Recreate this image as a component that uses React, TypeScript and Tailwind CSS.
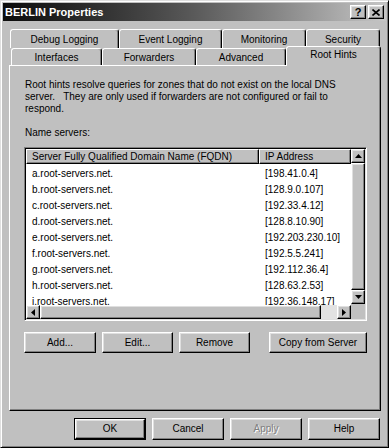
import React from 'react';

// classic 3D edges
const raised =
  'border border-t-white border-l-white border-r-black border-b-black shadow-[inset_-1px_-1px_0_#808080,inset_1px_1px_0_#dfdfdf] bg-[#c0c0c0]';
const sunken =
  'border border-t-[#808080] border-l-[#808080] border-r-white border-b-white shadow-[inset_1px_1px_0_#000,inset_-1px_-1px_0_#dfdfdf]';

const servers = [
  ['a.root-servers.net.', '[198.41.0.4]'],
  ['b.root-servers.net.', '[128.9.0.107]'],
  ['c.root-servers.net.', '[192.33.4.12]'],
  ['d.root-servers.net.', '[128.8.10.90]'],
  ['e.root-servers.net.', '[192.203.230.10]'],
  ['f.root-servers.net.', '[192.5.5.241]'],
  ['g.root-servers.net.', '[192.112.36.4]'],
  ['h.root-servers.net.', '[128.63.2.53]'],
  ['i.root-servers.net.', '[192.36.148.17]'],
];

const Arrow = ({dir}: {dir: 'up' | 'down' | 'left' | 'right'}) => {
  const pts = {
    up: '3.5,0 7,4 0,4',
    down: '0,0 7,0 3.5,4',
    left: '4,0 4,7 0,3.5',
    right: '0,0 4,3.5 0,7',
  }[dir];
  const vertical = dir === 'up' || dir === 'down';
  return (
    <svg
      width={vertical ? 7 : 4}
      height={vertical ? 4 : 7}
      viewBox={vertical ? '0 0 7 4' : '0 0 4 7'}
    >
      <polygon points={pts} fill="#000" />
    </svg>
  );
};

const Tab = ({label, w, selected}: {label: string; w: string; selected?: boolean}) => (
  <div
    className={`${w} ${
      selected ? 'relative z-10 -mb-px h-[20px] pb-[3px]' : 'h-full pt-px'
    } flex items-center justify-center rounded-t-[3px] border-t border-l border-r border-t-white border-l-white border-r-black bg-[#c0c0c0] shadow-[inset_-1px_0_0_#808080]`}
  >
    {label}
  </div>
);

const Button = ({label, w, disabled}: {label: string; w: string; disabled?: boolean}) => (
  <div
    className={`${w} ${raised} flex h-full items-center justify-center ${
      disabled ? 'text-[#808080] [text-shadow:1px_1px_0_#fff]' : ''
    }`}
  >
    {label}
  </div>
);

export default function App() {
  return (
    <div className="h-[448px] w-[389px] bg-[#c0c0c0] font-['Liberation_Sans',Arial,sans-serif] text-[10px] leading-[12px] text-black">
      <div className="flex h-full flex-col border border-t-[#dfdfdf] border-l-[#dfdfdf] border-r-black border-b-black p-[2px] shadow-[inset_1px_1px_0_#fff,inset_-1px_-1px_0_#808080]">
        {/* title bar */}
        <div className="flex h-[18px] items-center justify-between bg-gradient-to-r from-[#0c0c0c] via-[#5a5a5a] to-[#c6c6c6] pl-[2px] pr-[2px]">
          <span className="text-[11px] font-bold text-white">BERLIN Properties</span>
          <div className="flex gap-[2px]">
            <div className={`${raised} flex h-[14px] w-[16px] items-center justify-center text-[11px] font-bold leading-none`}>
              ?
            </div>
            <div className={`${raised} flex h-[14px] w-[16px] items-center justify-center`}>
              <svg width="8" height="7" viewBox="0 0 8 7">
                <path d="M0.5 0.5 L7.5 6.5 M7.5 0.5 L0.5 6.5" stroke="#000" strokeWidth="1.6" />
              </svg>
            </div>
          </div>
        </div>

        {/* tabs */}
        <div className="ml-[7px] mt-[8px] flex h-[19px]">
          <Tab label="Debug Logging" w="w-[109px]" />
          <Tab label="Event Logging" w="w-[103px]" />
          <Tab label="Monitoring" w="w-[84px]" />
          <Tab label="Security" w="w-[74px]" />
        </div>
        <div className="ml-[8px] flex h-[17px] items-end">
          <Tab label="Interfaces" w="w-[91px]" />
          <Tab label="Forwarders" w="w-[94px]" />
          <Tab label="Advanced" w="w-[90px]" />
          <Tab label="Root Hints" w="w-[95px]" selected />
        </div>

        {/* panel */}
        <div className="ml-[6px] flex h-[346px] w-[372px] flex-col border border-t-white border-l-white border-r-black border-b-black pl-[14px] pt-[13px] shadow-[inset_-1px_-1px_0_#808080]">
          <p className="whitespace-pre-wrap pl-px">
            Root hints resolve queries for zones that do not exist on the local DNS
            <br />
            server.{'   '}They are only used if forwarders are not configured or fail to
            <br />
            respond.
          </p>
          <p className="mt-[12px] pl-px">Name servers:</p>

          <div className={`mt-[8px] flex h-[174px] w-[343px] bg-white p-px ${sunken}`}>
            <div className="flex flex-1 flex-col overflow-hidden">
              <div className="flex h-[15px] shrink-0">
                <div className="flex w-[233px] items-center border border-t-white border-l-white border-r-black border-b-black bg-[#c0c0c0] pl-[5px] shadow-[inset_-1px_-1px_0_#808080]">
                  Server Fully Qualified Domain Name (FQDN)
                </div>
                <div className="flex flex-1 items-center border border-t-white border-l-white border-r-black border-b-black bg-[#c0c0c0] pl-[5px] shadow-[inset_-1px_-1px_0_#808080]">
                  IP Address
                </div>
              </div>
              <div className="flex-1 overflow-hidden pt-[2px]">
                {servers.map(([name, ip]) => (
                  <div key={name} className="flex h-[16px] items-center">
                    <span className="w-[233px] pl-[6px]">{name}</span>
                    <span className="pl-[6px]">{ip}</span>
                  </div>
                ))}
              </div>
              <div className="flex h-[14px] shrink-0">
                <div className={`${raised} flex w-[14px] items-center justify-center`}>
                  <Arrow dir="left" />
                </div>
                <div className={`${raised} flex-1`} />
                <div className="w-[16px] bg-[#e2e2e2]" />
                <div className={`${raised} flex w-[14px] items-center justify-center`}>
                  <Arrow dir="right" />
                </div>
              </div>
            </div>
            <div className="flex w-[14px] flex-col">
              <div className={`${raised} flex h-[14px] items-center justify-center`}>
                <Arrow dir="up" />
              </div>
              <div className={`${raised} flex-1`} />
              <div className={`${raised} flex h-[14px] items-center justify-center`}>
                <Arrow dir="down" />
              </div>
              <div className="h-[15px] bg-[#c0c0c0]" />
            </div>
          </div>

          <div className="mt-[11px] flex h-[21px] w-[343px] gap-[6px]">
            <Button label="Add..." w="w-[72px]" />
            <Button label="Edit..." w="w-[71px]" />
            <Button label="Remove" w="w-[71px]" />
            <div className="ml-auto flex h-full">
              <Button label="Copy from Server" w="w-[98px]" />
            </div>
          </div>
        </div>

        {/* dialog buttons */}
        <div className="mr-[6px] mt-[7px] flex h-[22px] justify-end gap-[6px]">
          <div className="h-full w-[72px] border border-black">
            <Button label="OK" w="w-full" />
          </div>
          <Button label="Cancel" w="w-[72px]" />
          <Button label="Apply" w="w-[72px]" disabled />
          <Button label="Help" w="w-[72px]" />
        </div>
      </div>
    </div>
  );
}
